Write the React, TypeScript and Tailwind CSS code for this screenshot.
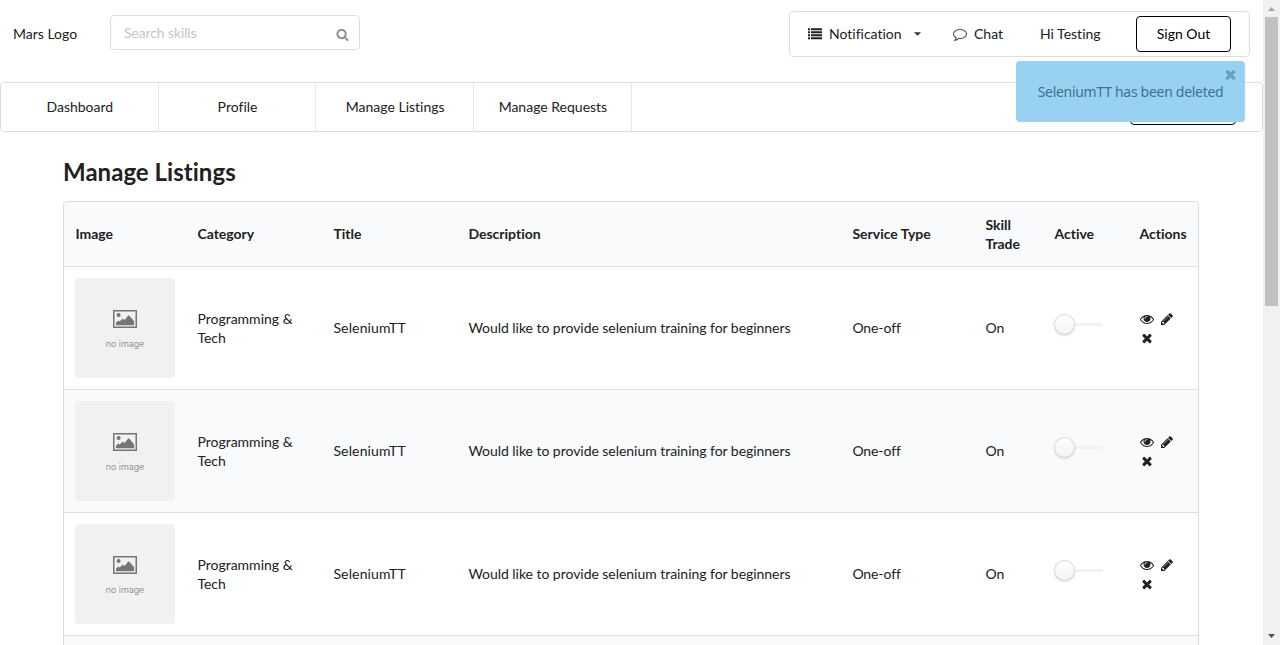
import type { ReactNode } from 'react';

const paths = {
  search:
    'M1216 832q0-185-131.5-316.5t-316.5-131.5-316.5 131.5-131.5 316.5 131.5 316.5 316.5 131.5 316.5-131.5 131.5-316.5zm512 832q0 52-38 90t-90 38q-54 0-90-38l-343-342q-179 124-399 124-143 0-273.5-55.5t-225-150-150-225-55.5-273.5 55.5-273.5 150-225 225-150 273.5-55.5 273.5 55.5 225 150 150 225 55.5 273.5q0 220-124 399l343 343q37 37 37 90z',
  close:
    'M1490 1322q0 40-28 68l-136 136q-28 28-68 28t-68-28l-294-294-294 294q-28 28-68 28t-68-28l-136-136q-28-28-28-68t28-68l294-294-294-294q-28-28-28-68t28-68l136-136q28-28 68-28t68 28l294 294 294-294q28-28 68-28t68 28l136 136q28 28 28 68t-28 68l-294 294 294 294q28 28 28 68z',
  eye: 'M1664 960q-152-236-381-353 61 104 61 225 0 185-131.5 316.5t-316.5 131.5-316.5-131.5-131.5-316.5q0-121 61-225-229 117-381 353 133 205 333.5 326.5t434.5 121.5 434.5-121.5 333.5-326.5zm-720-384q0-20-14-34t-34-14q-125 0-214.5 89.5t-89.5 214.5q0 20 14 34t34 14 34-14 14-34q0-86 61-147t147-61q20 0 34-14t14-34zm848 384q0 34-20 69-140 230-376.5 368.5t-499.5 138.5-499.5-139-376.5-368q-20-35-20-69t20-69q140-229 376.5-368t499.5-139 499.5 139 376.5 368q20 35 20 69z',
  pencil:
    'M491 1536l91-91-235-235-91 91v107h128v128h107zm523-928q0-22-22-22-10 0-17 7l-542 542q-7 7-7 17 0 22 22 22 10 0 17-7l542-542q7-7 7-17zm-54-192l416 416-832 832h-416v-416zm683 96q0 53-37 90l-166 166-416-416 166-165q36-38 90-38 53 0 91 38l235 234q37 39 37 91z',
  list: 'M0 160h256v256h-256zM384 160h1408v256h-1408zM0 544h256v256h-256zM384 544h1408v256h-1408zM0 928h256v256h-256zM384 928h1408v256h-1408zM0 1312h256v256h-256zM384 1312h1408v256h-1408z',
  comment:
    'M896 384q-204 0-381.5 69.5t-282 187.5-104.5 255q0 112 71.5 213.5t201.5 175.5l87 50-27 96q-24 91-70 172 152-63 275-171l43-38 57 6q69 8 130 8 204 0 381.5-69.5t282-187.5 104.5-255-104.5-255-282-187.5-381.5-69.5zm896 512q0 174-120 321.5t-326 233-450 85.5q-70 0-145-8-198 175-460 242-49 14-114 22h-5q-15 0-27-10.5t-16-27.5v-1q-3-4-.5-12t2-10 4.5-9.5l6-9 7-8.5 8-9q7-8 31-34.5t34.5-38 31-39.5 32.5-51 27-59 26-76q-157-89-247.5-220t-90.5-281q0-174 120-321.5t326-233 450-85.5 450 85.5 326 233 120 321.5z',
};

function Icon({ name, className }: { name: keyof typeof paths; className?: string }) {
  return (
    <svg viewBox="0 0 1792 1792" fill="currentColor" className={className ?? 'h-[14px] w-[14px]'}>
      <path d={paths[name]} />
    </svg>
  );
}

function NoImage() {
  return (
    <div className="flex h-[100px] w-[100px] flex-col items-center rounded-[4px] bg-[#f1f1f1] pt-8 text-[#757575]">
      <svg viewBox="0 0 24 18" className="h-[18px] w-6 shrink-0">
        <rect x="0.75" y="0.75" width="22.5" height="16.5" fill="none" stroke="currentColor" strokeWidth="1.5" />
        <circle cx="5.6" cy="5" r="2" fill="currentColor" />
        <path d="M3 15.2v-2.4l2.2-2.2 1.4.8 3.2-2.8 1.8 1.4 3.8-4.8 1.2.8 4.5 5.2v4z" fill="currentColor" />
      </svg>
      <span className="mt-[10px] scale-y-90 font-[Inter] text-[9px] leading-3 font-light whitespace-nowrap">no image</span>
    </div>
  );
}

function Toggle() {
  return (
    <div className="flex h-[21px] w-[49px] items-center">
      <div className="z-10 h-[21px] w-[21px] shrink-0 rounded-full bg-linear-to-b from-white to-[#f3f3f3] shadow-[0_1px_2px_0_rgba(34,36,38,0.15),0_0_0_1px_rgba(34,36,38,0.15)_inset]" />
      <div className="h-[3px] flex-1 rounded-r-full bg-[#f2f2f2]" />
    </div>
  );
}

const columns = 'grid grid-cols-[122px_136px_135px_384px_133px_69px_85px_70px] items-center';

function Cell({ children }: { children: ReactNode }) {
  return <div className="pr-[10.5px] pb-px pl-[11.4px]">{children}</div>;
}

const headings = ['Image', 'Category', 'Title', 'Description', 'Service Type', 'Skill Trade', 'Active', 'Actions'];

function Row({ striped }: { striped: boolean }) {
  return (
    <div className={`${columns} h-[123px] border-t border-[#e0e1e2] ${striped ? 'bg-[#f9fafb]' : 'bg-white'}`}>
      <div className="px-[11px]"><NoImage /></div>
      <Cell>Programming &amp; Tech</Cell>
      <Cell><span className="tracking-[0.15px]">SeleniumTT</span></Cell>
      <Cell><span className="tracking-[-0.04px]">Would like to provide selenium training for beginners</span></Cell>
      <Cell><span className="tracking-[-0.1px]">One-off</span></Cell>
      <Cell>On</Cell>
      <div className="-mt-[7px] px-[11px]"><Toggle /></div>
      <div className="flex flex-wrap gap-x-[6px] gap-y-[5px] pr-[11px] pl-3">
        <Icon name="eye" />
        <Icon name="pencil" />
        <Icon name="close" />
      </div>
    </div>
  );
}

export default function App() {
  return (
    <div className="relative flex h-[645px] w-full overflow-hidden bg-white font-[Lato,'Liberation_Sans',sans-serif] text-[14px] leading-[19px] text-[#212121] [font-variant-ligatures:none]">
      <main className="h-full w-[1263px] shrink-0 overflow-hidden">
        <header className="flex h-[82px] items-start">
          <div className="mt-6 w-[97px] shrink-0 pl-[13px]">Mars Logo</div>
          <div className="mt-[15px] ml-[13px] flex h-[35px] w-[250px] items-center justify-between rounded-[4px] border border-[#dededf] pr-[10px] pl-[13px] text-[#c5c5c5]">
            <span className="pb-px tracking-[-0.12px]">Search skills</span>
            <Icon name="search" className="mt-[3px] h-[13px] w-[13px] text-[#8c8c8c]" />
          </div>
          <div className="mt-[11px] mr-[13px] ml-auto flex h-[46px] w-[461px] items-center rounded-[4px] border border-[#dededf] pl-[18px]">
            <Icon name="list" />
            <span className="ml-[7px] w-[85px] pb-[2px]">Notification</span>
            <svg viewBox="0 0 8 4" className="h-1 w-[7px] fill-[#333]"><path d="M0 0h8l-4 4z" /></svg>
            <Icon name="comment" className="ml-8 h-[14px] w-[14px] text-[#444]" />
            <span className="ml-[7px] w-[66px] pb-[2px]">Chat</span>
            <span className="w-[96px] pb-[2px]">Hi Testing</span>
            <button className="h-9 w-[95px] shrink-0 rounded-[4px] border border-black pb-px text-black">Sign Out</button>
          </div>
        </header>

        <nav className="flex h-[50px] items-center rounded-[4px] border border-[#dededf] text-center">
          {['Dashboard', 'Profile', 'Manage Listings', 'Manage Requests'].map((label) => (
            <div key={label} className="flex h-full w-[157.7px] items-center justify-center border-r border-[#e6e6e6] pb-px pl-px">
              {label}
            </div>
          ))}
          <button className="mr-[26px] ml-auto h-9 w-[106px] rounded-[4px] border border-black text-black">Share Skill</button>
        </nav>

        <section className="ml-[63px] w-[1136px] pt-[24px]">
          <h2 className="h-[45px] text-[24px] leading-[31px] font-bold tracking-[0.03px]">Manage Listings</h2>
          <div className="overflow-hidden rounded-[4px] border border-[#d9dadb]">
            <div className={`${columns} h-16 bg-[#f9fafb] font-bold`}>
              {headings.map((heading) => <Cell key={heading}>{heading}</Cell>)}
            </div>
            {[0, 1, 2].map((row) => <Row key={row} striped={row % 2 === 1} />)}
            <div className="h-[123px] border-t border-[#e0e1e2] bg-[#f9fafb]" />
          </div>
        </section>
      </main>

      <aside className="flex h-full w-[17px] flex-col items-center bg-[#f1f1f1]">
        <svg viewBox="0 0 17 17" className="h-[17px] w-[17px] shrink-0 fill-[#a3a3a3]"><path d="M5 11h7l-3.5-4z" /></svg>
        <div className="h-[289px] w-[13px] shrink-0 bg-[#c1c1c1]" />
        <svg viewBox="0 0 17 17" className="mt-auto h-[17px] w-[17px] shrink-0 fill-[#505050]"><path d="M5 6h7l-3.5 4z" /></svg>
      </aside>

      <div className="absolute top-[61px] left-[1016px] flex h-[61px] w-[229px] items-center justify-center rounded-[4px] bg-[#99d2f0] font-['Noto_Sans'] text-[14px] text-[#41708f]">
        <span className="tracking-[-0.3px] whitespace-nowrap">SeleniumTT has been deleted</span>
        <Icon name="close" className="absolute top-[6px] right-[7px] h-[15px] w-[15px] text-[#65a0c0]" />
      </div>
    </div>
  );
}
